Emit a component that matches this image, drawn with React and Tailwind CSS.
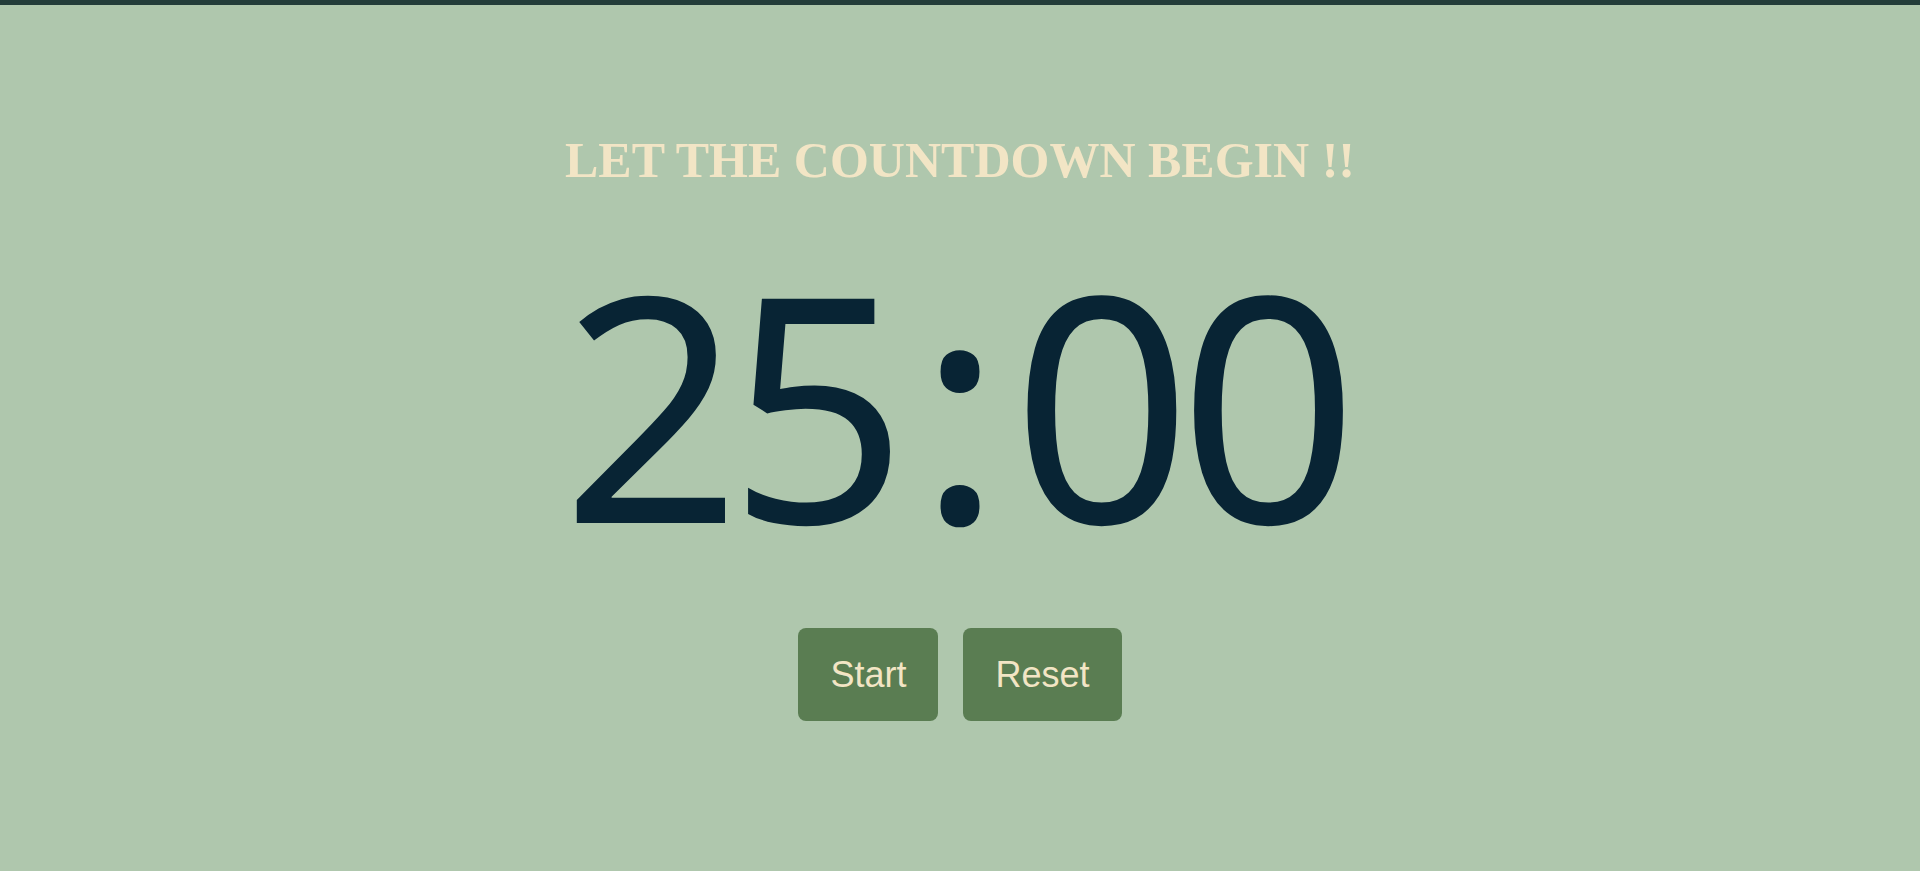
import { useState } from 'react'

export default function App() {
  const [time] = useState({ min: '25', sec: '00' })

  return (
    <div className="min-h-screen bg-[#afc7ad] border-t-[5px] border-[#243d3a] flex flex-col items-center">
      <h1 className="mt-[118px] text-[50px] font-bold text-[#f2e5c5] font-['Liberation_Serif',serif]">
        LET THE COUNTDOWN BEGIN !!
      </h1>

      <div className="mt-[46px] text-[314px] leading-none text-[#082434] font-['Noto_Sans',sans-serif] flex">
        <span className="tracking-[-13px] mr-[13px]">{time.min}</span>
        <span className="mx-[10px]">:</span>
        <span className="tracking-[-13px] mr-[13px]">{time.sec}</span>
      </div>

      <div className="mt-[70px] flex gap-[25px] font-['Liberation_Sans',sans-serif] text-[36px] text-[#f2e5c5]">
        <button className="bg-[#5a7d52] rounded-lg px-8 py-[26px] leading-[41px]">Start</button>
        <button className="bg-[#5a7d52] rounded-lg px-8 py-[26px] leading-[41px]">Reset</button>
      </div>
    </div>
  )
}
